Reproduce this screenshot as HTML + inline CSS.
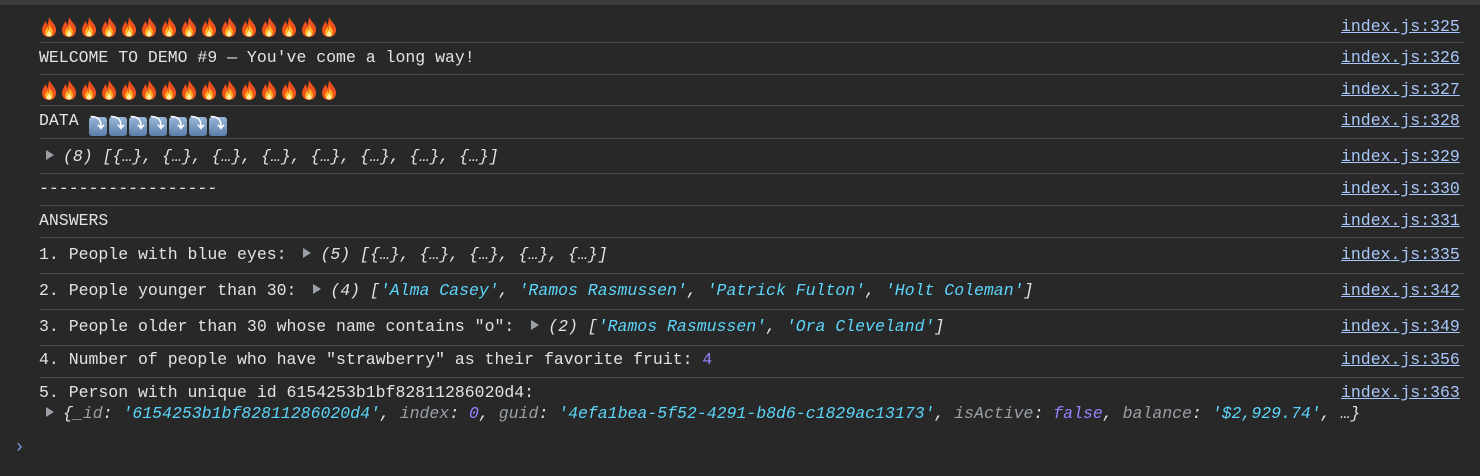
<!DOCTYPE html>
<html><head><meta charset="utf-8"><style>
html,body{margin:0;padding:0;background:#282828;width:1480px;height:476px;overflow:hidden}
body{font-family:"Liberation Mono",monospace;font-size:16.5px;color:#e3e3e3;position:relative}
.top{position:absolute;left:0;top:0;width:1480px;height:5px;background:#3c3c3c}
.sep{position:absolute;left:39px;width:1426px;height:1px;background:#474747}
.row{position:absolute;left:39px;white-space:pre;line-height:20px}
.link{position:absolute;left:1341px;color:#a8c7fa;text-decoration:underline;white-space:pre;line-height:20px}
.i{font-style:italic}
.s{color:#5cd5fb;font-style:italic}
.n{color:#9980ff}
.k{color:#9aa0a6;font-style:italic}
.tri{display:inline-block;width:0;height:0;border-left:8px solid #9aa0a6;border-top:5px solid transparent;border-bottom:5px solid transparent;margin:0 9px 0 7px;vertical-align:1px}
.f{display:inline-block;width:20px;height:22px;vertical-align:-5px}
.b{display:inline-block;width:18px;height:19px;margin-right:2px;background:linear-gradient(#9ab6d8,#5a7ea8);border-radius:3px;vertical-align:-3px;color:#fff;font-size:14px;text-align:center;line-height:17px;font-weight:bold}
.prompt{position:absolute;left:14px;top:438px;color:#7c9ae6;font-size:18px}
</style></head><body>
<div class="top"></div>
<svg width="0" height="0" style="position:absolute"><defs>
<symbol id="fire" viewBox="0 0 20 22"><path d="M10 1C12 6 17 8 17 14C17 18.5 14 21 10 21C6 21 3 18.5 3 14C3 10 6 8 6 5C8 7 8 9 8 10C9 7 10 4 10 1Z" fill="#f0521e"/><path d="M10 8C11 11 14 13 14 16C14 19 12 20.5 10 20.5C8 20.5 6 19 6 16.5C6 14 8 13 8 11C9 12 9 13 9.5 14C10 12 10 10 10 8Z" fill="#ffb020"/><path d="M10 14C11 16 12.5 17 12.5 18.5C12.5 20 11 20.5 10 20.5C9 20.5 7.5 20 7.5 18.5C7.5 17 9.5 16 10 14Z" fill="#fff1a0"/></symbol>
</defs></svg>

<div class="row" style="top:16px" id="f1"></div>
<div class="link" style="top:17px">index.js:325</div>
<div class="sep" style="top:42px"></div>

<div class="row" style="top:48px">WELCOME TO DEMO #9 — You've come a long way!</div>
<div class="link" style="top:48px">index.js:326</div>
<div class="sep" style="top:74px"></div>

<div class="row" style="top:79px" id="f2"></div>
<div class="link" style="top:80px">index.js:327</div>
<div class="sep" style="top:105px"></div>

<div class="row" style="top:111px">DATA <span class="b">⤵</span><span class="b">⤵</span><span class="b">⤵</span><span class="b">⤵</span><span class="b">⤵</span><span class="b">⤵</span><span class="b">⤵</span></div>
<div class="link" style="top:111px">index.js:328</div>
<div class="sep" style="top:138px"></div>

<div class="row i" style="top:147px;left:39px"><span class="tri"></span>(8) [{…}, {…}, {…}, {…}, {…}, {…}, {…}, {…}]</div>
<div class="link" style="top:147px">index.js:329</div>
<div class="sep" style="top:173px"></div>

<div class="row" style="top:179px">------------------</div>
<div class="link" style="top:179px">index.js:330</div>
<div class="sep" style="top:205px"></div>

<div class="row" style="top:211px">ANSWERS</div>
<div class="link" style="top:211px">index.js:331</div>
<div class="sep" style="top:237px"></div>

<div class="row" style="top:245px">1. People with blue eyes: <span class="tri"></span><span class="i">(5) [{…}, {…}, {…}, {…}, {…}]</span></div>
<div class="link" style="top:245px">index.js:335</div>
<div class="sep" style="top:273px"></div>

<div class="row" style="top:281px">2. People younger than 30: <span class="tri"></span><span class="i">(4) [<span class="s">'Alma Casey'</span>, <span class="s">'Ramos Rasmussen'</span>, <span class="s">'Patrick Fulton'</span>, <span class="s">'Holt Coleman'</span>]</span></div>
<div class="link" style="top:281px">index.js:342</div>
<div class="sep" style="top:309px"></div>

<div class="row" style="top:317px">3. People older than 30 whose name contains "o": <span class="tri"></span><span class="i">(2) [<span class="s">'Ramos Rasmussen'</span>, <span class="s">'Ora Cleveland'</span>]</span></div>
<div class="link" style="top:317px">index.js:349</div>
<div class="sep" style="top:345px"></div>

<div class="row" style="top:350px">4. Number of people who have "strawberry" as their favorite fruit: <span class="n">4</span></div>
<div class="link" style="top:350px">index.js:356</div>
<div class="sep" style="top:377px"></div>

<div class="row" style="top:383px">5. Person with unique id 6154253b1bf82811286020d4:</div>
<div class="link" style="top:383px">index.js:363</div>
<div class="row i" style="top:404px"><span class="tri"></span>{<span class="k">_id</span>: <span class="s">'6154253b1bf82811286020d4'</span>, <span class="k">index</span>: <span class="n">0</span>, <span class="k">guid</span>: <span class="s">'4efa1bea-5f52-4291-b8d6-c1829ac13173'</span>, <span class="k">isActive</span>: <span class="n">false</span>, <span class="k">balance</span>: <span class="s">'$2,929.74'</span>, …}</div>

<div class="prompt">›</div>
<script>
var h='';for(var i=0;i<15;i++)h+='<svg class="f"><use href="#fire"/></svg>';
document.getElementById('f1').innerHTML=h;document.getElementById('f2').innerHTML=h;
</script>
</body></html>
